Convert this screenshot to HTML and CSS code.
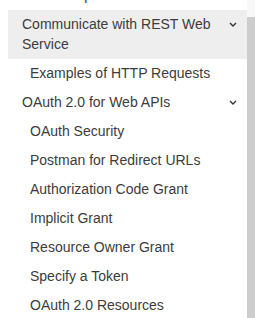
FILE: index.html
```html
<!DOCTYPE html>
<html>

<head>
    <title>API Docs Navigation</title>
    <link rel="stylesheet" href="styles.css">
</head>

<body>

    <div class="sidebar">
        <div class="nav">
            <ul class="nav-list">
                <li class="nav-item">
                    <span class="nav-text">API Examples</span>
                </li>
                <li class="nav-item active">
                    <span class="nav-text">Communicate with REST Web Service</span>
                    <span class="chevron"><svg width="8" height="5" viewBox="0 0 8 5"><polyline points="1,1 4,4 7,1" /></svg></span>
                </li>
                <li class="nav-item sub">
                    <span class="nav-text">Examples of HTTP Requests</span>
                </li>
                <li class="nav-item">
                    <span class="nav-text">OAuth 2.0 for Web APIs</span>
                    <span class="chevron"><svg width="8" height="5" viewBox="0 0 8 5"><polyline points="1,1 4,4 7,1" /></svg></span>
                </li>
                <li class="nav-item sub"><span class="nav-text">OAuth Security</span></li>
                <li class="nav-item sub"><span class="nav-text">Postman for Redirect URLs</span></li>
                <li class="nav-item sub"><span class="nav-text">Authorization Code Grant</span></li>
                <li class="nav-item sub"><span class="nav-text">Implicit Grant</span></li>
                <li class="nav-item sub"><span class="nav-text">Resource Owner Grant</span></li>
                <li class="nav-item sub"><span class="nav-text">Specify a Token</span></li>
                <li class="nav-item sub"><span class="nav-text">OAuth 2.0 Resources</span></li>
            </ul>
        </div>
        <!-- fake scrollbar -->
        <div class="scrollbar">
            <div class="thumb"></div>
        </div>
    </div>

</body>

</html>
```

FILE: styles.css
```css
body {
    margin: 0;
    background: #fff;
    font-family: "Liberation Sans", Arial, sans-serif;
    font-size: 14px;
    color: #3c3c3c;
}

.sidebar {
    display: flex;
    width: 255px;
    height: 318px;
    overflow: hidden;
}

.nav {
    flex: 1;
    overflow: hidden;
    padding-left: 8px;
}

.nav-list {
    list-style: none;
    margin: -19px 0 0 0;
    padding: 0;
}

.nav-item {
    display: flex;
    align-items: flex-start;
    gap: 8px;
    padding: 4px 10px 5px 14px;
    line-height: 20px;
}

.nav-item.sub {
    padding-left: 22px;
}

.nav-item.active {
    background-color: #eeeeee;
}

.nav-text {
    flex: 1;
}

.chevron {
    display: flex;
    align-items: center;
    height: 20px;
    width: 8px;
}

.chevron svg {
    display: block;
}

.chevron polyline {
    fill: none;
    stroke: #333;
    stroke-width: 1.4;
}

.scrollbar {
    width: 8px;
    display: flex;
    flex-direction: column;
    background-color: #f8f8f8;
}

.thumb {
    flex: 1;
    margin-top: 17px;
    background-color: #cdcdcd;
}
```
